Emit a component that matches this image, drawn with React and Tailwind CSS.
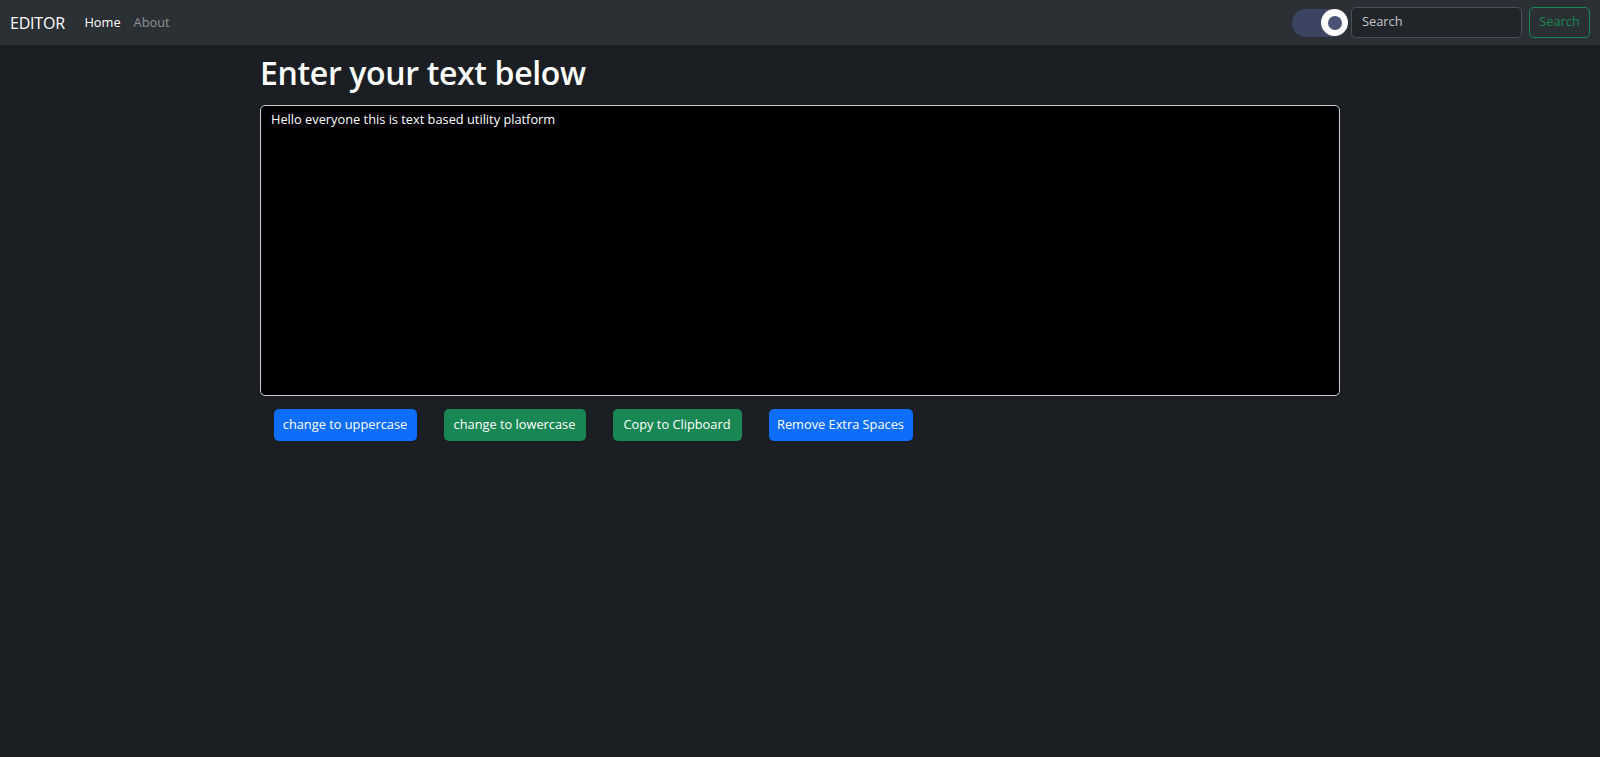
import React from "react";

export default function App() {
  const font = "font-['Open_Sans','Noto_Sans',sans-serif]";
  return (
    <div className={`min-h-[757px] bg-[#1b1e22] ${font}`}>
      <nav className="h-[45px] bg-[#2b3035] flex items-center justify-between px-[10px]">
        <div className="flex items-center">
          <span className="text-[16px] text-white mr-[13px] tracking-[-0.2px]">EDITOR</span>
          <span className="text-[12.8px] text-white px-[6.5px]">Home</span>
          <span className="text-[12.8px] text-[#8d9094] px-[6.5px]">About</span>
        </div>
        <div className="flex items-center">
          <div className="w-[56px] h-[28px] rounded-full bg-[#3b4460] flex items-center justify-end mr-[3px]">
            <div className="w-[27px] h-[27px] rounded-full bg-white flex items-center justify-center">
              <div className="w-[14px] h-[14px] rounded-full bg-[#4a5373]"></div>
            </div>
          </div>
          <div className="w-[171px] h-[31px] rounded-[5px] border border-[#495057] bg-[#212529] flex items-center px-[10px] pb-[1px] text-[12.8px] text-[#c3c6ca]">
            Search
          </div>
          <div className="ml-[7px] w-[61px] h-[31px] rounded-[5px] border border-[#198754] flex items-center justify-center pb-[1px] text-[12.8px] text-[#198754]">
            Search
          </div>
        </div>
      </nav>
      <div className="w-[1100px] mx-auto px-[10px] pt-[8px]">
        <h1 className="text-[32px] leading-[40px] font-semibold text-white mb-[12px] tracking-[-0.35px]">
          Enter your text below
        </h1>
        <div className="w-full h-[291px] bg-black border border-[#c9ccd0] rounded-[5px] px-[10px] pt-[3px] text-[12.8px] leading-[20px] text-white">
          Hello everyone this is text based utility platform
        </div>
        <div className="flex mt-[13px]">
          <button className="mx-[13.5px] w-[143px] h-[32px] rounded-[5px] bg-[#0d6efd] text-white text-[12.8px]">
            change to uppercase
          </button>
          <button className="mx-[13.5px] w-[142px] h-[32px] rounded-[5px] bg-[#198754] text-white text-[12.8px]">
            change to lowercase
          </button>
          <button className="mx-[13.5px] w-[129px] h-[32px] rounded-[5px] bg-[#198754] text-white text-[12.8px]">
            Copy to Clipboard
          </button>
          <button className="mx-[13.5px] w-[144px] h-[32px] rounded-[5px] bg-[#0d6efd] text-white text-[12.8px]">
            Remove Extra Spaces
          </button>
        </div>
      </div>
    </div>
  );
}
